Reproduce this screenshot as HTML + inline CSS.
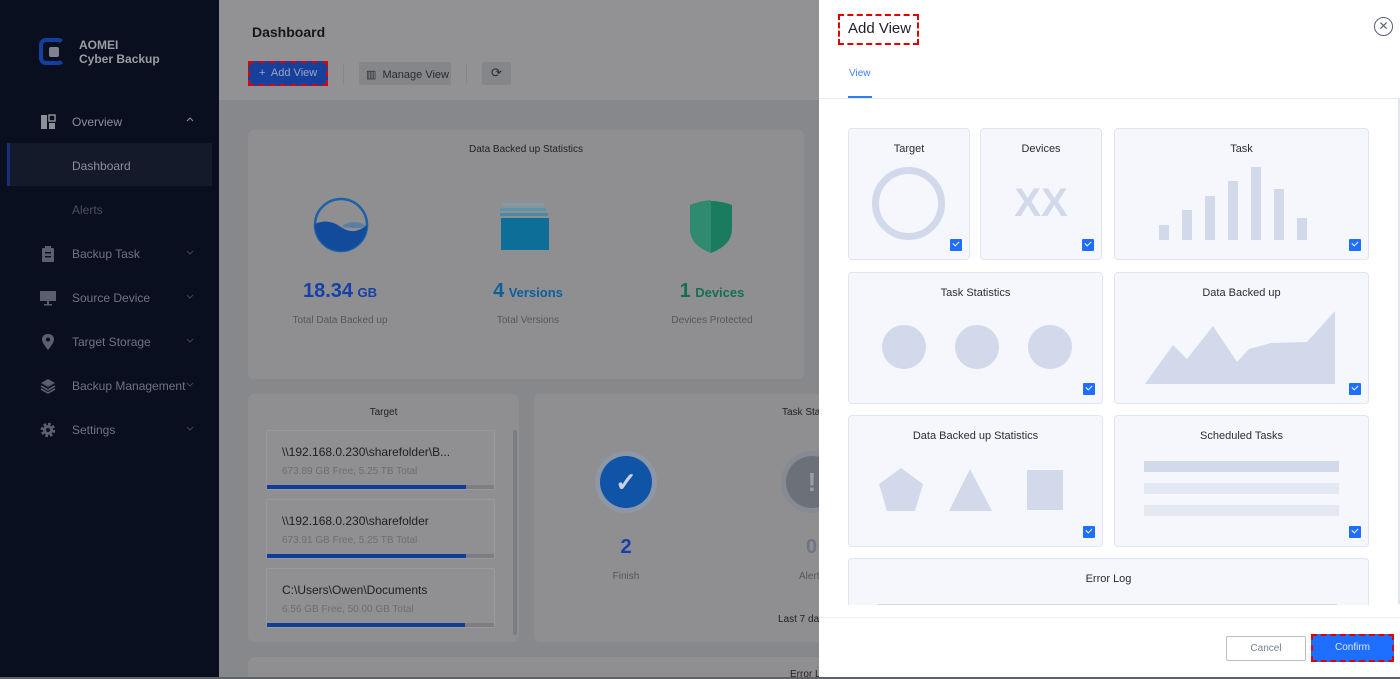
<!DOCTYPE html>
<html><head><meta charset="utf-8">
<style>
*{box-sizing:border-box;margin:0;padding:0}
html,body{width:1400px;height:679px;overflow:hidden}
body{font-family:"Liberation Sans",sans-serif;background:#87888c;position:relative}
.abs{position:absolute}
.side{left:0;top:0;width:219px;height:679px;background:#0a0f1f}
.nav{position:absolute;left:0;width:219px;height:16px;font-size:12px;color:#6f7381}
.nav svg.i{position:absolute;left:40px;top:0}
.nav .t{position:absolute;left:72px;top:1px}
.nav .ch{position:absolute;left:186px;top:2px}
.card{position:absolute;background:#8f8f91;border-radius:6px}
.tcard{position:absolute;left:266px;width:229px;height:60px;border:1px solid #9a9a9c;background:#909092;border-radius:2px}
.tcard .a{position:absolute;left:15px;top:14px;font-size:12px;color:#1e1f24}
.tcard .b{position:absolute;left:15px;top:35px;font-size:10px;color:#6d6e72}
.tcard .bar{position:absolute;left:0;bottom:0;width:227px;height:4px;background:#7d7e82}
.tcard .bar i{display:block;height:4px;background:#0f3d98}
.panel{left:819px;top:0;width:581px;height:677px;background:#fff}
.vc{position:absolute;background:#f5f7fc;border:1px solid #dfe5f2;border-radius:4px}
.vc .h{position:absolute;top:14px;width:100%;text-align:center;font-size:11px;color:#2a2d35}
.cb{position:absolute;width:12px;height:12px;background:#1e6fff;border-radius:1px}
.cb:after{content:"";position:absolute;left:3px;top:2px;width:5px;height:3px;border-left:1.5px solid #fff;border-bottom:1.5px solid #fff;transform:rotate(-45deg)}
.sh{background:#d1d9ea}
</style></head><body>
<div class="abs side">
  <div class="abs" style="left:39px;top:38px;width:26px;height:27px;border:4px solid #1340a0;border-right-color:transparent;border-radius:7px"></div>
  <div class="abs" style="left:49px;top:47px;width:10px;height:10px;background:#7e8290;border-radius:2px"></div>
  <div class="abs" style="left:79px;top:38px;color:#9a9da6;font-weight:bold;font-size:12px;line-height:14px">AOMEI<br>Cyber Backup</div>
  <div class="nav" style="top:114px;color:#8b8f99"><svg class="i" width="16" height="16"><rect x="1" y="1" width="6" height="14" fill="#8b8f99"/><rect x="9" y="1" width="6" height="6" fill="none" stroke="#8b8f99" stroke-width="1.5"/><rect x="9" y="9" width="6" height="6" fill="#8b8f99"/></svg><span class="t">Overview</span><svg class="ch" width="8" height="8"><path d="M1 5 L4 2 L7 5" stroke="#8b8f99" fill="none"/></svg></div>
  <div class="abs" style="left:7px;top:143px;width:205px;height:43px;background:#141a2a;border-left:3px solid #13307a"></div>
  <div class="nav" style="top:158px;color:#8b8f99"><span class="t">Dashboard</span></div>
  <div class="nav" style="top:202px;color:#4a4f5c"><span class="t">Alerts</span></div>
  <div class="nav" style="top:246px"><svg class="i" width="16" height="16"><rect x="2" y="2" width="12" height="14" rx="1" fill="#5b5f6b"/><rect x="5" y="0" width="6" height="3" fill="#5b5f6b"/><rect x="5" y="6" width="6" height="1.5" fill="#0a0f1f"/><rect x="5" y="10" width="6" height="1.5" fill="#0a0f1f"/></svg><span class="t">Backup Task</span><svg class="ch" width="8" height="8"><path d="M1 3 L4 6 L7 3" stroke="#3f4450" fill="none"/></svg></div>
  <div class="nav" style="top:290px"><svg class="i" width="16" height="16"><rect x="0" y="1" width="16" height="10" fill="#5b5f6b"/><rect x="7" y="11" width="2" height="3" fill="#5b5f6b"/><rect x="4" y="14" width="8" height="1.5" fill="#5b5f6b"/></svg><span class="t">Source Device</span><svg class="ch" width="8" height="8"><path d="M1 3 L4 6 L7 3" stroke="#3f4450" fill="none"/></svg></div>
  <div class="nav" style="top:334px"><svg class="i" width="16" height="16"><path d="M8 0 C3.5 0 2 3 2 5.5 C2 9 8 16 8 16 C8 16 14 9 14 5.5 C14 3 12.5 0 8 0Z" fill="#5b5f6b"/><circle cx="8" cy="5.5" r="2" fill="#0a0f1f"/></svg><span class="t">Target Storage</span><svg class="ch" width="8" height="8"><path d="M1 3 L4 6 L7 3" stroke="#3f4450" fill="none"/></svg></div>
  <div class="nav" style="top:378px"><svg class="i" width="16" height="16"><path d="M8 1 L15 5 L8 9 L1 5Z" fill="#5b5f6b"/><path d="M1 8 L8 12 L15 8" stroke="#5b5f6b" stroke-width="1.6" fill="none"/><path d="M1 11 L8 15 L15 11" stroke="#5b5f6b" stroke-width="1.6" fill="none"/></svg><span class="t">Backup Management</span><svg class="ch" width="8" height="8"><path d="M1 3 L4 6 L7 3" stroke="#3f4450" fill="none"/></svg></div>
  <div class="nav" style="top:422px"><svg class="i" width="16" height="16"><circle cx="8" cy="8" r="5.5" fill="none" stroke="#5b5f6b" stroke-width="3.5" stroke-dasharray="2.5 1.8"/><circle cx="8" cy="8" r="5" fill="#5b5f6b"/><circle cx="8" cy="8" r="2" fill="#0a0f1f"/></svg><span class="t">Settings</span><svg class="ch" width="8" height="8"><path d="M1 3 L4 6 L7 3" stroke="#3f4450" fill="none"/></svg></div>
</div>
<div class="abs" style="left:219px;top:0;width:600px;height:100px;background:#929294"></div>
<div class="abs" style="left:252px;top:24px;font-size:14px;font-weight:bold;color:#16171b">Dashboard</div>
<div class="abs" style="left:248px;top:61px;width:80px;height:25px;background:#173f9c;border:2px dashed #d00"></div>
<div class="abs" style="left:259px;top:67px;font-size:11px;color:#9aa6c5">+&nbsp; Add View</div>
<div class="abs" style="left:343px;top:64px;width:1px;height:20px;background:#85868a"></div>
<div class="abs" style="left:359px;top:62px;width:92px;height:23px;background:#85868a;border-radius:2px;font-size:11px;color:#2a2b30;padding:6px 0 0 7px">▥ &nbsp;Manage View</div>
<div class="abs" style="left:466px;top:64px;width:1px;height:20px;background:#85868a"></div>
<div class="abs" style="left:482px;top:62px;width:29px;height:23px;background:#85868a;border-radius:2px;font-size:13px;color:#2a2b30;text-align:center;padding-top:3px">⟳</div>

<div class="card" style="left:248px;top:130px;width:556px;height:249px"></div>
<div class="abs" style="left:248px;top:144px;width:556px;text-align:center;font-size:10px;color:#222">Data Backed up Statistics</div>
<svg class="abs" style="left:313px;top:197px" width="56" height="56"><defs><clipPath id="c"><circle cx="28" cy="28" r="26"/></clipPath></defs><circle cx="28" cy="28" r="26" fill="none" stroke="#1a63a8" stroke-width="2.5"/><g clip-path="url(#c)"><path d="M0 28 Q14 20 28 30 T56 26 V56 H0Z" fill="#134b9c"/><path d="M30 28 Q42 22 52 28 V30 Q42 32 30 30Z" fill="#5d7ea3"/></g></svg>
<div class="abs" style="left:502px;top:203px;width:42px;height:3px;background:#7e9cac"></div>
<div class="abs" style="left:500px;top:208px;width:46px;height:3px;background:#5f93ab"></div>
<div class="abs" style="left:500px;top:213px;width:48px;height:3px;background:#4a8aa8"></div>
<div class="abs" style="left:501px;top:218px;width:48px;height:32px;background:#0d6e98"></div>
<svg class="abs" style="left:688px;top:199px" width="46" height="56"><path d="M2 6 Q23 -2 44 6 V30 Q44 46 23 54 Q2 46 2 30Z" fill="#1b7b5e"/><path d="M2 6 Q12 2 23 1 V54 Q2 46 2 30Z" fill="#2f8a6f"/></svg>
<div class="abs" style="left:250px;top:280px;width:180px;text-align:center;color:#1540a8;font-weight:bold"><span style="font-size:20px">18.34</span> <span style="font-size:13px">GB</span></div>
<div class="abs" style="left:438px;top:280px;width:180px;text-align:center;color:#0d5f99;font-weight:bold"><span style="font-size:20px">4</span> <span style="font-size:13px">Versions</span></div>
<div class="abs" style="left:622px;top:280px;width:180px;text-align:center;color:#127050;font-weight:bold"><span style="font-size:20px">1</span> <span style="font-size:13px">Devices</span></div>
<div class="abs" style="left:250px;top:315px;width:180px;text-align:center;font-size:10px;color:#55575c">Total Data Backed up</div>
<div class="abs" style="left:438px;top:315px;width:180px;text-align:center;font-size:10px;color:#55575c">Total Versions</div>
<div class="abs" style="left:622px;top:315px;width:180px;text-align:center;font-size:10px;color:#55575c">Devices Protected</div>

<div class="card" style="left:248px;top:394px;width:271px;height:248px"></div>
<div class="abs" style="left:248px;top:407px;width:271px;text-align:center;font-size:10px;color:#222">Target</div>
<div class="abs" style="left:513px;top:430px;width:4px;height:205px;background:#7c7d80;border-radius:2px"></div>
<div class="tcard" style="top:430px"><div class="a">\\192.168.0.230\sharefolder\B...</div><div class="b">673.89 GB Free, 5.25 TB Total</div><div class="bar"><i style="width:199px"></i></div></div>
<div class="tcard" style="top:499px"><div class="a">\\192.168.0.230\sharefolder</div><div class="b">673.91 GB Free, 5.25 TB Total</div><div class="bar"><i style="width:199px"></i></div></div>
<div class="tcard" style="top:568px"><div class="a">C:\Users\Owen\Documents</div><div class="b">6.56 GB Free, 50.00 GB Total</div><div class="bar"><i style="width:198px"></i></div></div>
<div class="card" style="left:534px;top:394px;width:300px;height:248px"></div>
<div class="abs" style="left:782px;top:407px;font-size:10px;color:#222">Task Stat</div>
<div class="abs" style="left:595px;top:451px;width:62px;height:62px;border-radius:50%;background:#8d97a6"></div>
<div class="abs" style="left:600px;top:456px;width:52px;height:52px;border-radius:50%;background:#0f54a6;color:#c9d1dc;font-size:26px;text-align:center;line-height:52px;font-weight:bold">✓</div>
<div class="abs" style="left:781px;top:451px;width:62px;height:62px;border-radius:50%;background:#858a93"></div>
<div class="abs" style="left:786px;top:456px;width:52px;height:52px;border-radius:50%;background:#6c7078;color:#9a9da3;font-size:26px;line-height:52px;text-align:center;font-weight:bold">!</div>
<div class="abs" style="left:596px;top:536px;width:60px;text-align:center;font-size:20px;font-weight:bold;color:#1540a8">2</div>
<div class="abs" style="left:806px;top:536px;font-size:20px;font-weight:bold;color:#6f7582">0</div>
<div class="abs" style="left:596px;top:571px;width:60px;text-align:center;font-size:10px;color:#55575c">Finish</div>
<div class="abs" style="left:799px;top:571px;font-size:10px;color:#55575c">Alert</div>
<div class="abs" style="left:778px;top:614px;font-size:10px;color:#222">Last 7 da</div>
<div class="card" style="left:248px;top:657px;width:600px;height:20px;border-radius:6px 6px 0 0"></div>
<div class="abs" style="left:790px;top:669px;font-size:10px;color:#222;height:8px;overflow:hidden;line-height:12px">Error L</div>
<div class="abs" style="left:0;top:677px;width:1400px;height:2px;background:#5f6168"></div>

<div class="abs panel">
  <div class="abs" style="left:19px;top:14px;width:81px;height:31px;border:2px dashed #e00000"></div>
  <div class="abs" style="left:29px;top:20px;font-size:15px;color:#1c1f2a">Add View</div>
  <div class="abs" style="left:555px;top:17px;width:19px;height:19px;border:1.5px solid #556080;border-radius:50%;text-align:center;font-size:12px;line-height:16px;color:#556080">✕</div>
  <div class="abs" style="left:30px;top:68px;font-size:10px;color:#3b82f6">View</div>
  <div class="abs" style="left:29px;top:96px;width:24px;height:2px;background:#2f7bf6"></div>
  <div class="abs" style="left:0;top:98px;width:581px;height:1px;background:#e6e9f0"></div>
  <div class="abs" style="left:579px;top:99px;width:2px;height:505px;background:#e2e5ea"></div>

  <div class="vc" style="left:29px;top:128px;width:122px;height:132px"><div class="h">Target</div>
    <div class="abs" style="left:23px;top:38px;width:73px;height:73px;border:7px solid #d1d9ea;border-radius:50%"></div><div class="cb" style="left:101px;top:110px"></div></div>
  <div class="vc" style="left:161px;top:128px;width:122px;height:132px"><div class="h">Devices</div>
    <div class="abs" style="left:0;top:52px;width:100%;text-align:center;font-size:40px;font-weight:bold;color:#d1d9ea">XX</div><div class="cb" style="left:101px;top:110px"></div></div>
  <div class="vc" style="left:295px;top:128px;width:255px;height:132px"><div class="h">Task</div>
    <div class="abs sh" style="left:44px;top:96px;width:10px;height:15px"></div>
    <div class="abs sh" style="left:67px;top:81px;width:10px;height:30px"></div>
    <div class="abs sh" style="left:90px;top:67px;width:10px;height:44px"></div>
    <div class="abs sh" style="left:113px;top:52px;width:10px;height:59px"></div>
    <div class="abs sh" style="left:136px;top:38px;width:10px;height:73px"></div>
    <div class="abs sh" style="left:159px;top:60px;width:10px;height:51px"></div>
    <div class="abs sh" style="left:182px;top:89px;width:10px;height:22px"></div>
    <div class="cb" style="left:234px;top:110px"></div></div>

  <div class="vc" style="left:29px;top:272px;width:255px;height:132px"><div class="h">Task Statistics</div>
    <div class="abs sh" style="left:33px;top:52px;width:44px;height:44px;border-radius:50%"></div>
    <div class="abs sh" style="left:106px;top:52px;width:44px;height:44px;border-radius:50%"></div>
    <div class="abs sh" style="left:179px;top:52px;width:44px;height:44px;border-radius:50%"></div>
    <div class="cb" style="left:234px;top:110px"></div></div>
  <div class="vc" style="left:295px;top:272px;width:255px;height:132px"><div class="h">Data Backed up</div>
    <svg class="abs" style="left:30px;top:36px" width="192" height="76"><path d="M0 75 L28 36 L42 50 L68 17 L92 53 L104 40 L126 34 L162 33 L190 2 L190 75Z" fill="#d1d9ea"/></svg>
    <div class="cb" style="left:234px;top:110px"></div></div>

  <div class="vc" style="left:29px;top:415px;width:255px;height:132px"><div class="h">Data Backed up Statistics</div>
    <svg class="abs" style="left:28px;top:52px" width="196" height="44"><path d="M24 0 L46 16 L38 43 L10 43 L2 16Z" fill="#d1d9ea"/><path d="M93 1 L115 43 L72 43Z" fill="#d1d9ea"/><rect x="150" y="2" width="36" height="40" fill="#d1d9ea"/></svg>
    <div class="cb" style="left:234px;top:110px"></div></div>
  <div class="vc" style="left:295px;top:415px;width:255px;height:132px"><div class="h">Scheduled Tasks</div>
    <div class="abs sh" style="left:29px;top:45px;width:195px;height:11px"></div>
    <div class="abs" style="left:29px;top:67px;width:195px;height:11px;background:#e3e8f3"></div>
    <div class="abs" style="left:29px;top:89px;width:195px;height:11px;background:#e3e8f3"></div>
    <div class="cb" style="left:234px;top:110px"></div></div>

  <div class="vc" style="left:29px;top:558px;width:521px;height:50px;border-bottom:none;border-radius:4px 4px 0 0"><div class="h">Error Log</div>
    <div class="abs sh" style="left:28px;top:45px;width:460px;height:3px"></div></div>
  <div class="abs" style="left:0;top:605px;width:581px;height:13px;background:#fff"></div>
  <div class="abs" style="left:0;top:617px;width:581px;height:1px;background:#eceef2"></div>

  <div class="abs" style="left:407px;top:636px;width:80px;height:25px;border:1px solid #b9c0cc;border-radius:2px;text-align:center;font-size:10px;line-height:23px;color:#7b8290">Cancel</div>
  <div class="abs" style="left:492px;top:634px;width:83px;height:28px;border:2px dashed #e00000;background:#1e6fff;text-align:center;font-size:10px;line-height:24px;color:#dbe7ff">Confirm</div>
</div>
</body></html>
